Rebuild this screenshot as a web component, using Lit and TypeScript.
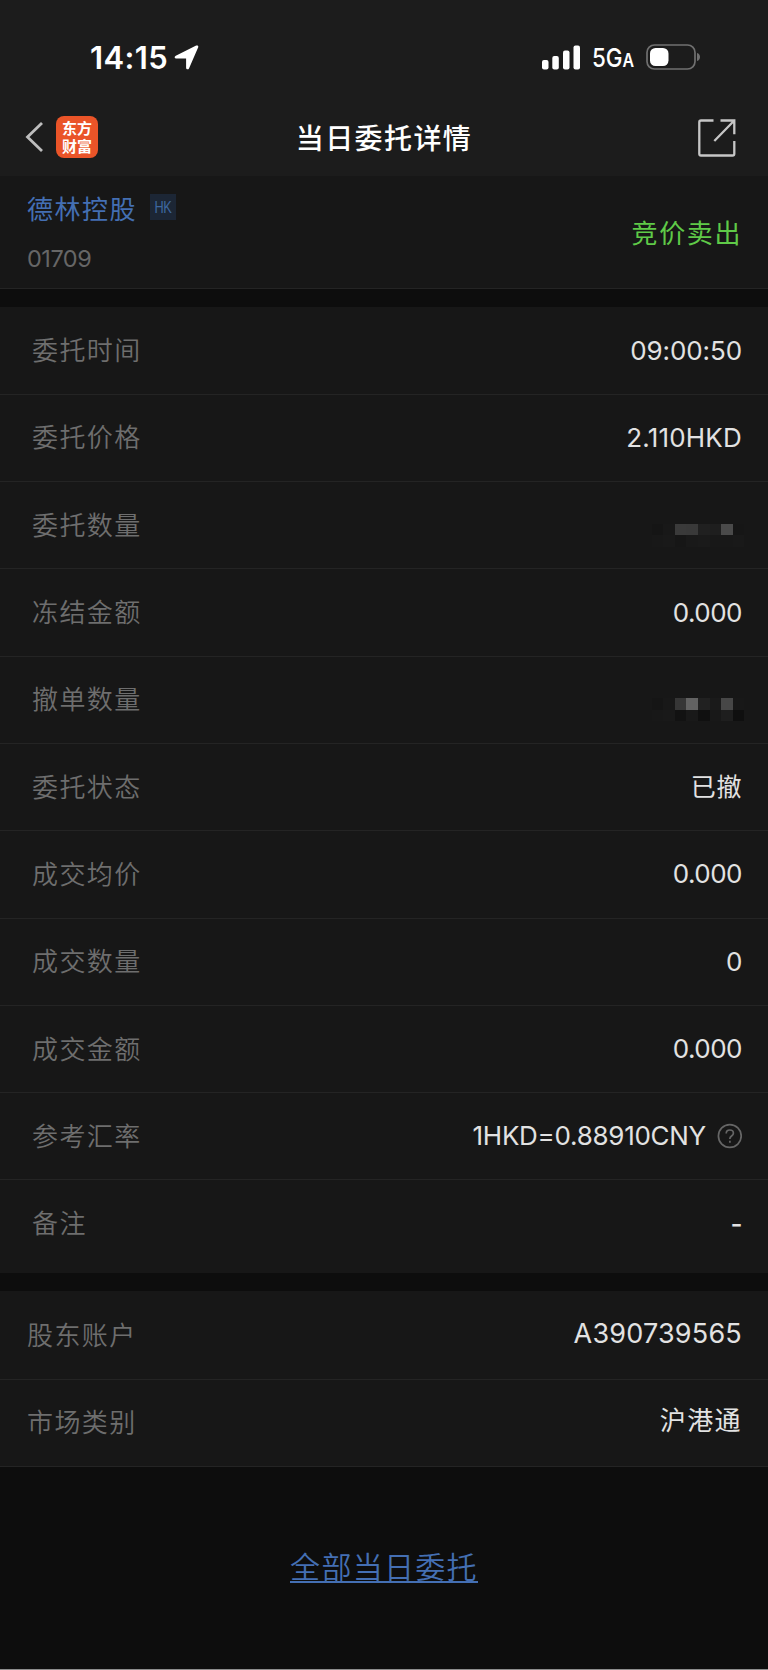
import { LitElement, html, css, svg } from "lit";
import { customElement, property } from "lit/decorators.js";

const MASK_A = [
  "#151515", "#181818", "#3a3a3a", "#393939", "#202020", "#1e1e1e", "#4a4a4a", "#161616",
  "#181818", "#191919", "#161616", "#191919", "#1a1a1a", "#181818", "#181818", "#191919",
];
const MASK_B = [
  "#151515", "#181818", "#363636", "#626262", "#212121", "#1a1a1a", "#474747", "#181818",
  "#181818", "#191919", "#121212", "#191919", "#101010", "#181818", "#1e1e1e", "#0f0f0f",
];

interface Item {
  label: string;
  value?: string;
  mask?: string[];
  help?: boolean;
  cls?: string;
}

const ORDER: Item[] = [
  { label: "委托时间", value: "09:00:50", cls: "time" },
  { label: "委托价格", value: "2.110HKD", cls: "price" },
  { label: "委托数量", mask: MASK_A },
  { label: "冻结金额", value: "0.000" },
  { label: "撤单数量", mask: MASK_B },
  { label: "委托状态", value: "已撤", cls: "han" },
  { label: "成交均价", value: "0.000" },
  { label: "成交数量", value: "0" },
  { label: "成交金额", value: "0.000" },
  { label: "参考汇率", value: "1HKD=0.88910CNY", help: true, cls: "rate" },
  { label: "备注", value: "-", cls: "dash" },
];

const ACCOUNT: Item[] = [
  { label: "股东账户", value: "A390739565", cls: "account" },
  { label: "市场类别", value: "沪港通", cls: "han wide" },
];

@customElement("detail-row")
export class DetailRow extends LitElement {
  @property({ attribute: false }) item!: Item;

  static styles = css`
    :host {
      display: flex;
      box-sizing: border-box;
      align-items: center;
      justify-content: space-between;
      height: 87.3px;
      padding: 0 26px 0 var(--inset, 32px);
      border-bottom: 1.4px solid #242424;
    }
    .label {
      margin-top: var(--label-drop, 1px);
      color: #6e6e6e;
      font-size: 26px;
      font-weight: 350;
      letter-spacing: 1.4px;
      line-height: 40px;
    }
    .value {
      display: flex;
      align-items: center;
      color: #e2e2e2;
      font-size: 26px;
      font-weight: 370;
      line-height: 40px;
      letter-spacing: -0.5px;
    }
    .time { letter-spacing: -0.1px; }
    .price { letter-spacing: 0.2px; }
    .rate { letter-spacing: -0.27px; }
    .han { font-size: 25px; letter-spacing: 0.6px; }
    .account { font-size: 27px; letter-spacing: 0.2px; margin-top: -2px; }
    .wide { font-size: 26px; letter-spacing: 1.4px; margin-top: -3px; }
    .dash { font-weight: 500; margin-top: -2px; }
    .help { display: block; margin-left: 10px; }
    .mask {
      display: grid;
      grid-template-columns: repeat(8, 11.6px);
      grid-auto-rows: 11.6px;
      margin: 20px -2.4px 0 0;
    }
  `;

  render() {
    const { label, value, mask, help, cls } = this.item;
    return html`
      <span class="label">${label}</span>
      ${mask
        ? html`<span class="mask">${mask.map((c) => html`<i style="background:${c}"></i>`)}</span>`
        : html`<span class="value ${cls ?? ""}">${value}${help
            ? html`<svg class="help" width="26" height="26" viewBox="0 0 26 26" fill="none" stroke="#666" stroke-width="1.7">
                <circle cx="13.8" cy="13" r="11.4" />
                <path d="M10.2 10.6c0-2.2 1.5-3.6 3.6-3.6s3.6 1.3 3.6 3.2c0 2.7-3.5 2.8-3.5 5.2v.7M13.9 17.8v2" />
              </svg>`
            : ""}</span>`}
    `;
  }
}

@customElement("app-root")
export class AppRoot extends LitElement {
  static styles = css`
    :host {
      display: flex;
      flex-direction: column;
      box-sizing: border-box;
      width: 768px;
      height: 1670px;
      overflow: hidden;
      background: #0d0d0d;
      border-bottom: 1px solid #8d8d8d;
      color: #fff;
      font-family: Inter, "Noto Sans CJK SC", sans-serif;
    }
    svg { display: block; }
    .status {
      display: flex;
      align-items: center;
      height: 100px;
      padding: 14px 67px 0 90px;
      box-sizing: border-box;
      background: #1c1c1c;
      flex: none;
    }
    .clock { font-size: 31px; font-weight: 600; letter-spacing: 0.4px; line-height: 40px; margin-top: 1px; }
    .arrow { margin-left: 6px; }
    .signal { margin-left: auto; }
    .net {
      display: flex;
      align-items: baseline;
      margin-left: 12px;
      width: 42px;
      font-size: 26px;
      font-weight: 550;
      line-height: 32px;
      transform: scaleX(0.86);
      transform-origin: left;
      margin-top: 4px;
    }
    .net small { font-size: 18.5px; font-weight: 600; margin-left: 0; }
    .battery { margin-left: 12px; }
    .nav {
      display: grid;
      grid-template-columns: 1fr auto 1fr;
      align-items: center;
      height: 76px;
      box-sizing: border-box;
      padding: 0 32px 2px 25px;
      background: #1c1c1c;
      flex: none;
    }
    .left { display: flex; align-items: center; gap: 13px; }
    .logo {
      display: grid;
      place-content: center;
      width: 42px;
      height: 42px;
      margin-top: -1px;
      border-radius: 8px;
      background: #ea5428;
      font-family: "Noto Sans CJK SC", sans-serif;
      font-size: 15px;
      font-weight: 700;
      line-height: 18px;
    }
    .title { font-size: 28px; font-weight: 500; letter-spacing: 1.4px; line-height: 40px; margin: 3px 0 0 7px; }
    .share { justify-self: end; margin-top: 2px; }
    .stock {
      display: flex;
      align-items: center;
      justify-content: space-between;
      box-sizing: border-box;
      height: 113px;
      padding: 0 26px 0 27px;
      background: #171717;
      border-bottom: 1px solid #242424;
      flex: none;
    }
    .name { display: flex; align-items: center; color: #446fb3; font-size: 26px; letter-spacing: 1.5px; line-height: 40px; font-weight: 370; }
    .tag {
      width: 26px;
      height: 26px;
      margin: -5px 0 0 13px;
      background: #1c2635;
      color: #3d669f;
      font-family: "Liberation Sans", sans-serif;
      font-size: 16px;
      letter-spacing: -0.4px;
      line-height: 28px;
      text-align: center;
    }
    .tag span { display: block; transform: scaleX(0.8); }
    .code { margin-top: 14px; color: #666; font-size: 23.5px; font-weight: 370; line-height: 30px; letter-spacing: -0.5px; }
    .left-col { margin-top: -1px; }
    .side { color: #5fca48; font-size: 26px; letter-spacing: 1.6px; font-weight: 370; margin-top: -2px; }
    .group { background: #171717; margin-top: 17.5px; padding-top: 1px; flex: none; }
    .last { height: 92.8px; padding-bottom: 4px; border-bottom: none; --label-drop: -1px; }
    .acct { --inset: 27px; --label-drop: 1px; padding-top: 1.5px; }
    .foot { display: flex; justify-content: center; padding-top: 80px; }
    .link {
      color: #446fb3;
      font-size: 30px;
      font-weight: 350;
      letter-spacing: 1.3px;
      line-height: 40px;
      height: 34px;
      border-bottom: 2.5px solid #446fb3;
    }
  `;

  render() {
    return html`
      <header class="status">
        <span class="clock">14:15</span>
        <svg class="arrow" width="25" height="25" viewBox="0 0 25 25" fill="#fff">
          <path d="M1.8 10.8 22.2.6c1.4-.7 2.6.5 1.9 1.9L15 23.4c-.7 1.6-2.9 1.1-2.9-.6V13.5H2.4C.4 13.5 0 11.7 1.8 10.8Z" />
        </svg>
        <svg class="signal" width="38" height="25" viewBox="0 0 38 25" fill="#fff">
          ${[[0, 15], [10.3, 11], [21, 5.5], [31.5, 0.5]].map(
            ([x, y]) => svg`<rect x=${x} y=${y} width="6.5" height=${24.5 - y} rx="2" />`,
          )}
        </svg>
        <span class="net">5G<small>A</small></span>
        <svg class="battery" width="55" height="26" viewBox="0 0 55 26">
          <rect x="1" y="1" width="48" height="24" rx="7.5" fill="none" stroke="#707070" stroke-width="1.7" />
          <rect x="4" y="4" width="18.5" height="18" rx="5.5" fill="#fff" />
          <path d="M51 9c4 1 4 7 0 8Z" fill="#707070" />
        </svg>
      </header>
      <nav class="nav">
        <div class="left">
          <svg width="18" height="30" viewBox="0 0 18 30" fill="none" stroke="#bdbdbd" stroke-width="2.8">
            <path d="M17 1 2.5 15 17 29" />
          </svg>
          <span class="logo"><span>东方</span><span>财富</span></span>
        </div>
        <span class="title">当日委托详情</span>
        <svg class="share" width="38" height="38" viewBox="0 0 38 38" fill="none" stroke="#c6c6c6" stroke-width="2.3">
          <path d="M15.5 1.5H3q-1.7 0-1.7 1.7v31.6q0 1.7 1.7 1.7h31.6q1.7 0 1.7-1.7V22M22.5 1.5h13.8v13.7M35.8 2 16.3 22" />
        </svg>
      </nav>
      <section class="stock">
        <div class="left-col">
          <div class="name">德林控股<span class="tag"><span>HK</span></span></div>
          <div class="code">01709</div>
        </div>
        <span class="side">竞价卖出</span>
      </section>
      <section class="group">
        ${ORDER.map((it, i) => html`<detail-row class=${i === ORDER.length - 1 ? "last" : ""} .item=${it}></detail-row>`)}
      </section>
      <section class="group acct">
        ${ACCOUNT.map((it) => html`<detail-row .item=${it}></detail-row>`)}
      </section>
      <footer class="foot"><span class="link">全部当日委托</span></footer>
    `;
  }
}
